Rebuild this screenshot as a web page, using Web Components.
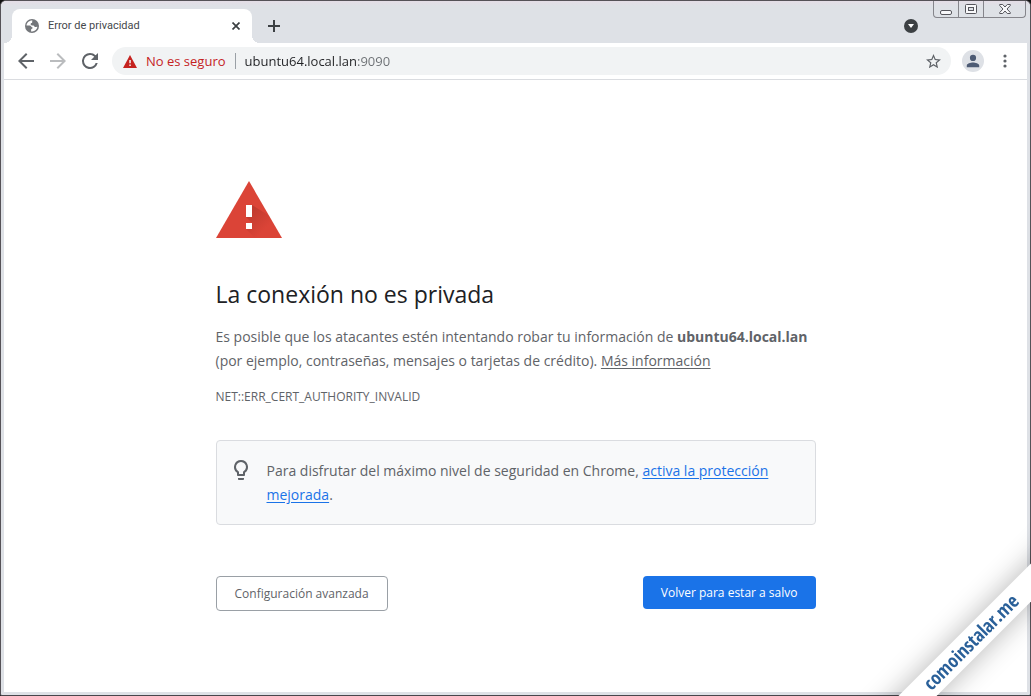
<!DOCTYPE html>
<html lang="es">
<head>
<meta charset="utf-8">
<meta name="viewport" content="width=device-width, initial-scale=1">
<title>Error de privacidad</title>
<style>
  html, body{ margin:0; background:#111; }
  body{
    font-family:"Open Sans","Noto Sans","Segoe UI",sans-serif;
    color:#5f6368;
  }
</style>
</head>
<body>
<browser-window>
  <tab-strip slot="tabs">
    <browser-tab>Error de privacidad</browser-tab>
    <window-controls slot="controls"></window-controls>
  </tab-strip>
  <address-bar slot="toolbar" url="ubuntu64.local.lan:9090">No es seguro</address-bar>
  <privacy-error>
    <span slot="title">La conexión no es privada</span>
    <security-tip slot="tip">Para disfrutar del máximo nivel de seguridad en Chrome,</security-tip>
  </privacy-error>
</browser-window>
<corner-ribbon>comoinstalar.me</corner-ribbon>

<script>
const define = (name, html) => {
  const tpl = document.createElement('template')
  tpl.innerHTML = html
  customElements.define(name, class extends HTMLElement{
    constructor(){
      super()
      this.attachShadow({mode:'open'}).appendChild(tpl.content.cloneNode(true))
    }
    connectedCallback(){
      const field = this.shadowRoot.querySelector('input')
      if(field && this.hasAttribute('url')) field.value = this.getAttribute('url')
    }
  })
}

// <browser-window>: frame, tabs, toolbar and page
define('browser-window', `
  <style>
    :host{
      display:flex; flex-direction:column; box-sizing:border-box;
      min-height:100vh;
      border:1px solid #555257; border-bottom-color:#47464b;
      border-radius:6px 6px 2px 2px;
      background:#dee1e6;
      overflow:hidden;
    }
    .inner{
      flex:1; display:flex; flex-direction:column;
      margin:0 3px 3px;
    }
    main{ flex:1; background:#fff; }
  </style>
  <slot name="tabs"></slot>
  <div class="inner">
    <slot name="toolbar"></slot>
    <main><slot></slot></main>
  </div>
`)

define('tab-strip', `
  <style>
    :host{
      display:flex; align-items:flex-end; height:42px;
      padding:0 4px 0 11px; box-sizing:border-box;
      background:linear-gradient(#e4dde6, #dee1e6 5px);
    }
    button{
      display:grid; place-items:center; padding:0; border:0;
      background:none; color:#3c4043;
    }
    .new{ width:28px; height:28px; margin:0 0 3px 8px; }
    .right{ margin-left:auto; align-self:stretch; display:flex; align-items:flex-start; gap:14px; }
    .search{ width:16px; height:16px; margin-top:17px; }
    svg{ display:block; }
  </style>
  <slot></slot>
  <button class="new" aria-label="Nueva pestaña">
    <svg width="12" height="12" viewBox="0 0 12 12" stroke="currentColor" stroke-width="2"><path d="M6 0v12M0 6h12"/></svg>
  </button>
  <div class="right">
    <button class="search" aria-label="Buscar pestañas">
      <svg width="14" height="14" viewBox="0 0 14 14"><circle cx="7" cy="7" r="7" fill="#3c4043"/><path d="M4 5h6L7 9z" fill="#fff"/></svg>
    </button>
    <slot name="controls"></slot>
  </div>
`)

define('browser-tab', `
  <style>
    :host{
      display:flex; align-items:center; position:relative;
      width:240px; height:34px; padding:0 9px 0 13px; box-sizing:border-box;
      border-radius:8px 8px 0 0; background:#fff;
      color:#45484c; font-family:Roboto,"Open Sans",sans-serif; font-size:11px; line-height:16px;
    }
    /* outward curves at the foot of the tab */
    :host::before, :host::after{
      content:""; position:absolute; bottom:0; width:8px; height:8px;
    }
    :host::before{ left:-8px; background:radial-gradient(circle at 0 0, transparent 8px, #fff 8px); }
    :host::after{ right:-8px; background:radial-gradient(circle at 100% 0, transparent 8px, #fff 8px); }
    .name{ flex:1; margin-left:9px; }
    button{ display:grid; place-items:center; width:14px; height:16px; padding:0; border:0; background:none; }
    svg{ display:block; }
  </style>
  <svg width="14" height="14" viewBox="0 0 14 14">
    <circle cx="7" cy="7" r="7" fill="#74777b"/>
    <path d="M7.500 1.500C4 1.300 1.500 4 1.500 6.600h3.300c1.400 0 1 1.600 2.200 1.600.8 0 .8.9.3 1.400-.5.4-1.200.4-1.200 1.100v1.700c3.400.6 6-2 6.300-4.600-1-.3-1.300.3-2 .3-1.300 0-.8-1.700-2.200-1.700-1.500 0-2.600-.2-2.600-1.200 0-1.300 1.300-.8 1.600-1.600.2-.8-.3-1.300.3-2.100z" fill="#fff"/>
  </svg>
  <span class="name"><slot></slot></span>
  <button aria-label="Cerrar pestaña">
    <svg width="8" height="8" viewBox="0 0 8 8" stroke="#3c4043" stroke-width="1.700"><path d="M.5.5l7 7M7.500.5l-7 7"/></svg>
  </button>
`)

define('window-controls', `
  <style>
    :host{ display:flex; height:17px; border:1px solid #85858b; border-top:0; border-radius:0 0 4px 4px; box-sizing:border-box; }
    button{
      display:grid; place-items:center; width:25px; padding:0;
      border:0; border-right:1px solid #85858b; background:none;
    }
    button:last-child{ width:41px; border:0; }
    svg{ display:block; fill:#f8f8fa; stroke:#56565c; }
  </style>
  <button aria-label="Minimizar"><svg width="12" height="12" viewBox="0 0 12 12"><rect x=".5" y="7.500" width="11" height="4" rx="1.500"/></svg></button>
  <button aria-label="Maximizar"><svg width="12" height="10" viewBox="0 0 12 10"><rect x=".5" y=".5" width="11" height="9" rx="1"/><rect x="3.500" y="3.500" width="5" height="3" fill="#dee1e6"/></svg></button>
  <button aria-label="Cerrar"><svg width="12" height="10" viewBox="0 0 12 10"><path d="M.7.5h3L6 3 8.300.5h3v1L8 5l3.300 3.500v1h-3L6 7 3.700 9.500h-3v-1L4 5 .7 1.500z"/></svg></button>
`)

// <address-bar url="...">security label</address-bar>
define('address-bar', `
  <style>
    :host{
      display:flex; align-items:center; height:37px; box-sizing:border-box;
      padding:0 14px 0 12px;
      background:#fff; border-bottom:1px solid #dadce0; color:#5f6368;
    }
    button{ display:grid; place-items:center; padding:0; border:0; background:none; color:inherit; }
    nav{ display:flex; gap:12px; }
    nav button{ width:20px; height:20px; }
    nav button:disabled{ color:#babcbe; }
    .field{
      flex:1; display:flex; align-items:center; height:28px;
      margin:0 11px 0 12px; padding:0 10px 0 11px;
      border-radius:14px; background:#f1f3f4;
      font-size:13px; line-height:20px;
    }
    .state{ margin-left:9px; color:#c5221f; white-space:nowrap; }
    .sep{ width:1px; height:16px; margin:0 9px; background:#9aa0a6; }
    /* host name dark, port grey */
    input{
      flex:1; min-width:0; height:20px; padding:0; border:0; outline:0;
      font:inherit; color:#202124;
      background:linear-gradient(90deg, #202124 113px, #6b6f73 113px);
      -webkit-background-clip:text; background-clip:text;
      -webkit-text-fill-color:transparent;
    }
    .me{ width:22px; height:22px; border-radius:50%; background:#dee1e6; color:#4d5b74; }
    .menu{ width:16px; height:20px; margin-left:13px; }
    svg{ display:block; fill:currentColor; }
  </style>
  <nav>
    <button aria-label="Atrás"><svg width="18" height="18" viewBox="3 3 18 18"><path d="M20 11H7.830l5.590-5.590L12 4l-8 8 8 8 1.410-1.410L7.830 13H20z"/></svg></button>
    <button aria-label="Adelante" disabled><svg width="18" height="18" viewBox="3 3 18 18"><path d="M12 4l-1.410 1.410L16.170 11H4v2h12.170l-5.580 5.590L12 20l8-8z"/></svg></button>
    <button aria-label="Recargar"><svg width="18" height="18" viewBox="3 3 18 18"><path d="M17.650 6.350A7.960 7.960 0 0 0 12 4a8 8 0 1 0 7.730 10h-2.080A6 6 0 1 1 12 6c1.660 0 3.140.690 4.220 1.780L13 11h7V4z"/></svg></button>
  </nav>
  <div class="field">
    <svg width="14" height="13" viewBox="0 0 14 13" style="color:#c5221f"><path d="M7 0l7 13H0z"/><path fill="#f1f3f4" d="M6.300 5h1.500v3.200H6.300zM6.300 9.500h1.500V11H6.300z"/></svg>
    <label class="state" for="url"><slot></slot></label>
    <span class="sep"></span>
    <input id="url" type="text" spellcheck="false">
    <button aria-label="Añadir a marcadores"><svg width="15" height="15" viewBox="2 2 20 20"><path d="M22 9.240l-7.190-.620L12 2 9.190 8.630 2 9.240l5.460 4.730L5.820 21 12 17.270 18.180 21l-1.630-7.030zM12 15.400l-3.760 2.270 1-4.280-3.320-2.880 4.380-.380L12 6.100l1.710 4.040 4.380.380-3.320 2.880 1 4.280z"/></svg></button>
  </div>
  <button class="me" aria-label="Perfil"><svg width="14" height="14" viewBox="3 3 18 18"><path d="M12 12a4 4 0 1 0 0-8 4 4 0 0 0 0 8zm0 2c-3 0-8 1.300-8 4v2h16v-2c0-2.700-5-4-8-4z"/></svg></button>
  <button class="menu" aria-label="Menú"><svg width="4" height="14" viewBox="0 0 4 14"><circle cx="2" cy="2" r="1.600"/><circle cx="2" cy="7" r="1.600"/><circle cx="2" cy="12" r="1.600"/></svg></button>
`)

define('privacy-error', `
  <style>
    :host{
      display:block; box-sizing:border-box; max-width:600px;
      margin:0 auto; padding-top:101px;
      font-size:14px; line-height:24px; color:#5f6368;
    }
    .mark{ display:block; }
    h1{ margin:41px 0 16px; font-size:23px; line-height:30px; font-weight:400; color:#202124; }
    p{ margin:0; }
    a{ color:inherit; text-underline-offset:2px; }
    .code{ margin:12px 0 31px; font-size:12px; }
    .actions{ display:flex; justify-content:space-between; align-items:flex-start; margin-top:51px; }
    button{
      padding:1px 18px 0; border:1px solid #9aa0a6; border-radius:4px;
      background:#fff; color:#5f6368;
      font-family:inherit; font-size:12px; line-height:32px;
    }
    .primary{ border:0; background:#1a73e8; color:#fff; font-weight:500; }
  </style>
  <svg class="mark" width="66" height="57" viewBox="0 0 66 57">
    <defs>
      <linearGradient id="fade" gradientUnits="userSpaceOnUse" x1="33" y1="30" x2="50" y2="47">
        <stop offset="0" stop-color="#9c2d24" stop-opacity=".45"/>
        <stop offset="1" stop-color="#9c2d24" stop-opacity="0"/>
      </linearGradient>
    </defs>
    <path d="M33 0l33 57H0z" fill="#db4437"/>
    <path d="M36 24l17 10.500L66 57H39L30 48l6-6-6-6z" fill="url(#fade)"/>
    <path d="M30 24h6v12h-6zM30 42h6v6h-6z" fill="#fff"/>
  </svg>
  <h1><slot name="title"></slot></h1>
  <p>Es posible que los atacantes estén intentando robar tu información de <strong>ubuntu64.local.lan</strong> (por ejemplo, contraseñas, mensajes o tarjetas de crédito). <a href="#info">Más información</a></p>
  <p class="code">NET::ERR_CERT_AUTHORITY_INVALID</p>
  <slot name="tip"></slot>
  <div class="actions">
    <button>Configuración avanzada</button>
    <button class="primary">Volver para estar a salvo</button>
  </div>
`)

define('security-tip', `
  <style>
    :host{
      display:flex; align-items:flex-start; gap:16px;
      padding:18px 30px 17px 14px;
      border:1px solid #dadce0; border-radius:4px; background:#f8f9fa;
    }
    svg{ flex:none; display:block; fill:#5f6368; }
    p{ margin:0; }
    a{ color:#1a73e8; text-underline-offset:2px; }
  </style>
  <svg width="20" height="22" viewBox="2 1 20 22"><path d="M9 21c0 .5.400 1 1 1h4c.6 0 1-.5 1-1v-1H9zm3-19a7 7 0 0 0-4 12.740V17c0 .5.400 1 1 1h6c.6 0 1-.5 1-1v-2.260A7 7 0 0 0 12 2zm2.850 11.100l-.850.600V16h-4v-2.300l-.850-.600A5 5 0 1 1 14.850 13.100z"/></svg>
  <p><slot></slot> <a href="#proteccion">activa la protección mejorada</a>.</p>
`)

// diagonal band over the bottom right corner
define('corner-ribbon', `
  <style>
    :host{ display:block; position:fixed; inset:0; overflow:hidden; pointer-events:none; }
    .band{
      position:absolute; right:-93px; bottom:43px; width:300px;
      box-sizing:border-box; padding-right:8px;
      transform:rotate(-45deg);
      background:#fff; box-shadow:0 0 28px rgba(0,0,0,.3);
      text-align:center; color:#2a6099;
      font-family:"Liberation Sans Narrow","Open Sans Condensed","DejaVu Sans Condensed",sans-serif;
      font-size:19px; font-weight:700; line-height:27px;
    }
  </style>
  <div class="band"><slot></slot></div>
`)
</script>
</body>
</html>
